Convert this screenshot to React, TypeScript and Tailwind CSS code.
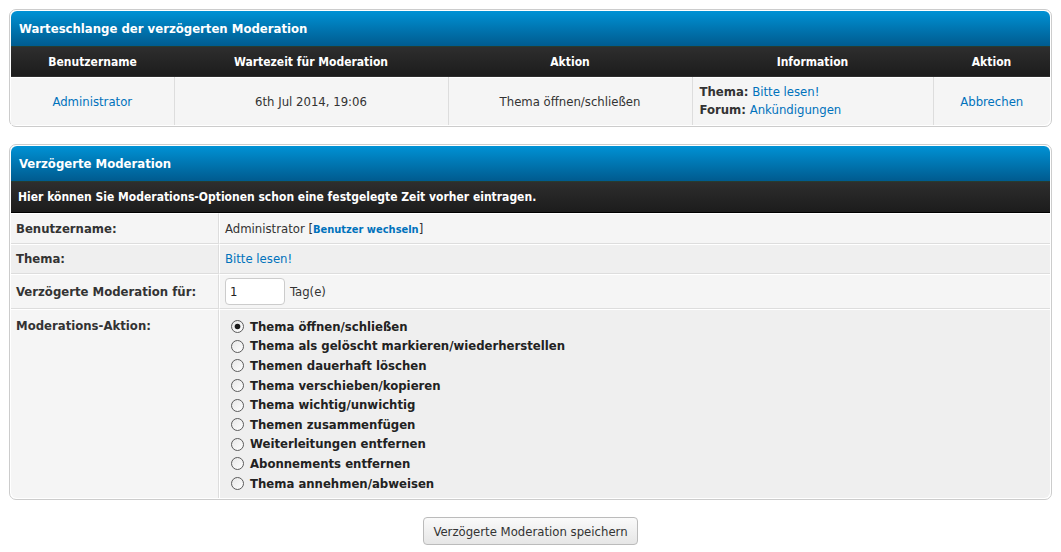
import React from 'react';

const actions = [
  'Thema öffnen/schließen',
  'Thema als gelöscht markieren/wiederherstellen',
  'Themen dauerhaft löschen',
  'Thema verschieben/kopieren',
  'Thema wichtig/unwichtig',
  'Themen zusammenfügen',
  'Weiterleitungen entfernen',
  'Abonnements entfernen',
  'Thema annehmen/abweisen',
];

function Radio({ checked }: { checked?: boolean }) {
  return (
    <svg width="13" height="13" viewBox="0 0 13 13" className="shrink-0">
      <defs>
        <linearGradient id={checked ? 'rg1' : 'rg0'} x1="0" y1="0" x2="1" y2="1">
          <stop offset="0" stopColor="#e6e6e6" />
          <stop offset="1" stopColor="#ffffff" />
        </linearGradient>
      </defs>
      <circle cx="6.5" cy="6.5" r="6" fill={`url(#${checked ? 'rg1' : 'rg0'})`} stroke="#5a5a5a" strokeWidth="1" />
      {checked && <circle cx="6.5" cy="6.5" r="2.8" fill="#1a1a1a" />}
    </svg>
  );
}

const thead =
  'bg-gradient-to-b from-[#0092d5] to-[#005b8f] border-b border-[#263c30] rounded-t-[6px] text-white font-bold px-[8px]';
const tcat =
  'bg-gradient-to-b from-[#2e2e2e] to-[#1c1c1c] border-b border-black text-white font-bold text-[12px]';
const cell = 'border-t border-l border-t-white border-l-white border-r border-b border-r-[#ddd] border-b-[#ddd]';

export default function App() {
  return (
    <div
      className="min-h-[552px] bg-white text-[13px] text-[#333] px-[9px] pt-[9px]"
      style={{ fontFamily: '"DejaVu Sans Condensed", "DejaVu Sans", Verdana, sans-serif' }}
    >
      {/* queue */}
      <div className="border border-[#ccc] rounded-[7px] p-px">
        <div className={`${thead} h-[36px] flex items-center`}>Warteschlange der verzögerten Moderation</div>
        <table className="w-full table-fixed border-collapse">
          <colgroup>
            <col className="w-[163px]" />
            <col className="w-[274px]" />
            <col className="w-[244px]" />
            <col className="w-[241px]" />
            <col />
          </colgroup>
          <thead>
            <tr className={`${tcat} h-[30px]`}>
              <th className="font-bold">Benutzername</th>
              <th className="font-bold">Wartezeit für Moderation</th>
              <th className="font-bold">Aktion</th>
              <th className="font-bold">Information</th>
              <th className="font-bold">Aktion</th>
            </tr>
          </thead>
          <tbody>
            <tr className="bg-[#f5f5f5] h-[48px]">
              <td className={`${cell} border-l-0 border-b-0 text-center text-[#0072bc]`}>Administrator</td>
              <td className={`${cell} border-b-0 text-center`}>6th Jul 2014, 19:06</td>
              <td className={`${cell} border-b-0 text-center`}>Thema öffnen/schließen</td>
              <td className={`${cell} border-b-0 px-[7px] leading-[18px]`}>
                <div>
                  <b>Thema:</b> <span className="text-[#0072bc]">Bitte lesen!</span>
                </div>
                <div>
                  <b>Forum:</b> <span className="text-[#0072bc]">Ankündigungen</span>
                </div>
              </td>
              <td className={`${cell} border-r-0 border-b-0 text-center text-[#0072bc] rounded-br-[6px]`}>Abbrechen</td>
            </tr>
          </tbody>
        </table>
      </div>

      {/* form */}
      <div className="mt-[17px] border border-[#ccc] rounded-[7px] p-px">
        <div className={`${thead} h-[36px] flex items-center`}>Verzögerte Moderation</div>
        <div className={`${tcat} h-[31px] flex items-center px-[7px]`}>
          Hier können Sie Moderations-Optionen schon eine festgelegte Zeit vorher eintragen.
        </div>
        <div className="grid grid-cols-[208px_1fr] leading-[18px]">
          <div className={`${cell} border-l-0 bg-[#f5f5f5] px-[5px] pt-[6px] pb-[4px] font-bold`}>Benutzername:</div>
          <div className={`${cell} border-r-0 bg-[#f5f5f5] px-[5px] pt-[6px] pb-[4px]`}>
            Administrator [<b className="text-[#0072bc] text-[11px]">Benutzer wechseln</b>]
          </div>

          <div className={`${cell} border-l-0 bg-[#efefef] px-[5px] py-[5px] font-bold`}>Thema:</div>
          <div className={`${cell} border-r-0 bg-[#efefef] px-[5px] py-[5px] text-[#0072bc]`}>Bitte lesen!</div>

          <div className={`${cell} border-l-0 bg-[#f5f5f5] px-[5px] flex items-center font-bold whitespace-nowrap`}>
            Verzögerte Moderation für:
          </div>
          <div className={`${cell} border-r-0 bg-[#f5f5f5] px-[5px] py-[3px] flex items-center gap-[5px]`}>
            <div className="w-[60px] h-[27px] bg-white border border-[#ccc] rounded-[4px] flex items-center px-[4px] text-[#222]">
              1
            </div>
            <span>Tag(e)</span>
          </div>

          <div className={`${cell} border-l-0 border-b-0 bg-[#f5f5f5] px-[5px] pt-[7px] pb-[6px] font-bold rounded-bl-[6px]`}>
            Moderations-Aktion:
          </div>
          <div className={`${cell} border-r-0 border-b-0 bg-[#efefef] pl-[11px] pt-[7px] pb-[5px] rounded-br-[6px]`}>
            {actions.map((a, i) => (
              <div key={a} className="h-[19.6px] flex items-center gap-[6px] font-bold text-[#222]">
                <Radio checked={i === 0} />
                <span>{a}</span>
              </div>
            ))}
          </div>
        </div>
      </div>

      <div className="flex justify-center pt-[17px]">
        <button className="h-[28px] px-[9px] border border-[#bbb] rounded-[4px] bg-gradient-to-b from-[#fafafa] to-[#e6e6e6] text-[#333] text-[13px]">
          Verzögerte Moderation speichern
        </button>
      </div>
    </div>
  );
}
